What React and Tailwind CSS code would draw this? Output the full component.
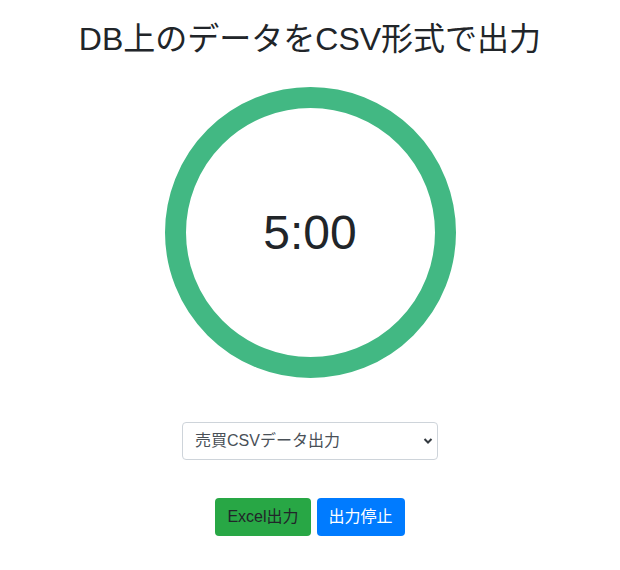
import React from 'react';

const FONT = '"Liberation Sans", "Noto Sans CJK JP", sans-serif';

const Timer = () => (
  <div className="relative w-[291px] h-[291px] mt-[29px]">
    <svg width="291" height="291" viewBox="0 0 291 291">
      <circle cx="145.5" cy="145.5" r="135" fill="none" stroke="#42b883" strokeWidth="21" />
    </svg>
    <div className="absolute inset-0 flex items-center justify-center text-[48px] text-[#212529]">
      5:00
    </div>
  </div>
);

export default function App() {
  return (
    <div className="min-h-screen bg-white flex flex-col items-center" style={{ fontFamily: FONT }}>
      <h1 className="mt-[20px] text-[32px] leading-[1.2] text-[#212529] font-normal">
        DB上のデータをCSV形式で出力
      </h1>
      <Timer />
      <div className="relative mt-[44px] w-[256px]">
        <select className="w-full h-[38px] appearance-none border border-[#ced4da] rounded-[4px] bg-white pl-[12px] pr-[28px] text-[16px] text-[#495057] outline-none">
          <option>売買CSVデータ出力</option>
        </select>
        <svg className="absolute right-[5px] top-[15px] pointer-events-none" width="10" height="8" viewBox="0 0 10 8">
          <path d="M1.5 2 L5 5.5 L8.5 2" fill="none" stroke="#343a40" strokeWidth="2" />
        </svg>
      </div>
      <div className="flex gap-[6px] mt-[38px]">
        <button className="h-[38px] px-[12px] rounded-[4px] bg-[#28a745] text-[#212529] text-[16px]">
          Excel出力
        </button>
        <button className="h-[38px] px-[12px] rounded-[4px] bg-[#007bff] text-white text-[16px]">
          出力停止
        </button>
      </div>
    </div>
  );
}
